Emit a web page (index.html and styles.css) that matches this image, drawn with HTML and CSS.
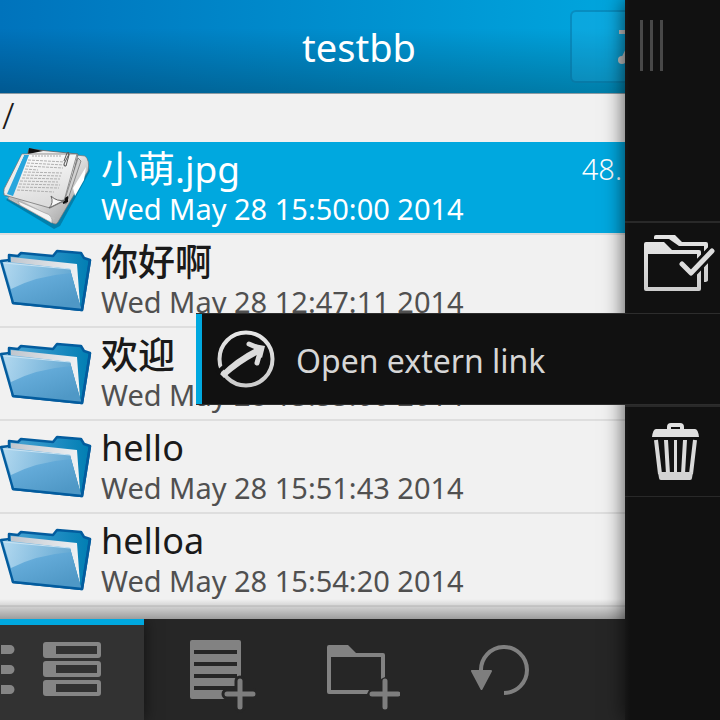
FILE: index.html
```html
<!DOCTYPE html>
<html lang="en">
<head>
<meta charset="utf-8">
<meta name="viewport" content="width=device-width, initial-scale=1">
<title>testbb</title>
<link rel="stylesheet" href="styles.css">
</head>
<body>
<svg class="defs" aria-hidden="true">
  <defs>
    <linearGradient id="back" x1="0" y1="0" x2="1" y2="0"><stop offset="0" stop-color="#4ba5d3"/><stop offset=".6" stop-color="#1e8cc2"/><stop offset="1" stop-color="#007eb2"/></linearGradient>
    <linearGradient id="front" x1="0" y1="0" x2=".6" y2="1"><stop offset="0" stop-color="#8cc4e6"/><stop offset=".5" stop-color="#63aad8"/><stop offset="1" stop-color="#4f98c6"/></linearGradient>
    <linearGradient id="shine" x1="0" y1="0" x2="1" y2="0"><stop offset="0" stop-color="#c0e0f3"/><stop offset="1" stop-color="#69abd3"/></linearGradient>
    <linearGradient id="paper" x1="0" y1="0" x2="1" y2="0"><stop offset="0" stop-color="#bfc6ce"/><stop offset="1" stop-color="#f0f2f4"/></linearGradient>
    <linearGradient id="sheet" x1="0" y1="0" x2=".3" y2="1"><stop offset="0" stop-color="#ffffff"/><stop offset="1" stop-color="#dcdcdc"/></linearGradient>
    <linearGradient id="binder" x1="0" y1="0" x2="1" y2="1"><stop offset="0" stop-color="#888"/><stop offset=".5" stop-color="#e4e4e4"/><stop offset="1" stop-color="#8d8d8d"/></linearGradient>
    <linearGradient id="light" x1="0" y1="0" x2="0" y2="1"><stop offset="0" stop-color="#e6e6e6"/><stop offset="1" stop-color="#cccccc"/></linearGradient>
  </defs>
  <symbol id="folder" viewBox="0 0 92 92">
    <path d="M9 24V20L18 21L21 18L53 21L57 16L81 18L84 23L90 25L82 75L13 68Z" fill="url(#back)" stroke="#035c9e" stroke-width="2.5" stroke-linejoin="round"/>
    <path d="M11 22L77 29L80 70L70 34L11 28Z" fill="url(#paper)"/>
    <path d="M1 26L70 34L80 70L82 75L13 68Z" fill="url(#front)"/>
    <path d="M3 27L69 34L71 38Q36 41 11 54Z" fill="url(#shine)" opacity=".75"/>
    <path d="M4 28L70 34" fill="none" stroke="#c9e3f3" stroke-width="1"/>
    <path d="M10 25L1 26L13 68L82 75L90 25" fill="none" stroke="#035c9e" stroke-width="2.5" stroke-linejoin="round"/>
  </symbol>
</svg>

<div class="app">
  <header class="title-bar">
    <h1>testbb</h1>
    <button class="header-button" aria-label="Edit">
      <svg width="24" height="36" viewBox="0 0 24 36" aria-hidden="true"><path d="M1 3H18L4 32" fill="none" stroke="#c2c2c2" stroke-width="4"/><circle cx="4" cy="31" r="4" fill="#c2c2c2"/></svg>
    </button>
  </header>

  <main class="content">
    <p class="path">/</p>
    <ul class="files">
      <li class="file selected">
        <svg class="thumb" viewBox="0 0 92 92" aria-hidden="true">
          <path d="M6 58L54 87L60 84L90 29L87 20L78 14L40 30Z" fill="#034e6d" opacity=".45"/>
          <path d="M30 7L76 13L85 14Q90 18 88 29L58 80Q56 84 51 80L8 57Z" fill="url(#binder)" stroke="#777" stroke-width=".7"/>
          <path d="M29 7L78 12L66 62L20 40Z" fill="#eee" stroke="#555" stroke-width=".7"/>
          <path d="M29 6L43 9L28 12Z" fill="#111"/>
          <path d="M73 46L86 25L84 38L75 54Z" fill="#fff"/>
          <path d="M5 55L20 58L55 76L52 81L10 57Z" fill="#bdbdbd"/>
          <path d="M18 59L45 71Q53 73 52 81L20 63Z" fill="#f4f4f4" stroke="#999" stroke-width=".6"/>
          <path d="M78 16L81 19L68 57L64 60Z" fill="#d0d0d0" stroke="#555" stroke-width=".6"/>
          <path d="M63 57L68 54V60L63 62Z" fill="#111"/>
          <path d="M22 12L77 12L64 59L50 66L4 53V47Z" fill="url(#sheet)" stroke="#777" stroke-width=".8"/>
          <path d="M24 13L29 13L13 54L7 52Z" fill="#27a6dd"/>
          <path d="M23 13L5 51" stroke="#ececec" stroke-width="2"/>
          <path d="M32 14H62" stroke="#aaa" stroke-width="1" stroke-dasharray="2 1"/>
          <path d="M28 18L65 20M27 21L64 23M26 24L63 26M25 27L38 28M24 30L62 31M23 33L61 34M22 36L60 37M20 39L58 40M19 42L60 43M18 45L59 46M17 48L54 50" stroke="#b0b0b0" stroke-width="1" stroke-dasharray="3 1"/>
          <path d="M65 58Q57 60 51 54Q54 61 49 66Z" fill="#f8f8f8" stroke="#666" stroke-width="1"/>
          <path d="M69 12L64 22Q64 25 66 24L69 13Q69 9 67 11L64 19" fill="none" stroke="#555" stroke-width="1"/>
        </svg>
        <div class="info"><span class="name" lang="zh">小萌.jpg</span><time class="date">Wed May 28 15:50:00 2014</time></div>
        <span class="size">48.</span>
      </li>
      <li class="file">
        <svg class="thumb" aria-hidden="true"><use href="#folder"/></svg>
        <div class="info"><span class="name" lang="zh">你好啊</span><time class="date">Wed May 28 12:47:11 2014</time></div>
      </li>
      <li class="file">
        <svg class="thumb" aria-hidden="true"><use href="#folder"/></svg>
        <div class="info"><span class="name" lang="zh">欢迎</span><time class="date">Wed May 28 13:53:00 2014</time></div>
      </li>
      <li class="file">
        <svg class="thumb" aria-hidden="true"><use href="#folder"/></svg>
        <div class="info"><span class="name">hello</span><time class="date">Wed May 28 15:51:43 2014</time></div>
      </li>
      <li class="file">
        <svg class="thumb" aria-hidden="true"><use href="#folder"/></svg>
        <div class="info"><span class="name">helloa</span><time class="date">Wed May 28 15:54:20 2014</time></div>
      </li>
    </ul>
  </main>

  <nav class="action-bar" aria-label="Actions">
    <button class="action current" aria-label="Files">
      <svg class="edge" width="16" height="80" viewBox="0 0 16 80" aria-hidden="true"><path d="M1 11H10a4.500 4.500 0 0 1 0 9H1ZM1 31H10a4.500 4.500 0 0 1 0 9H1ZM1 51H10a4.500 4.500 0 0 1 0 9H1Z" fill="#858585"/></svg>
      <svg width="80" height="80" viewBox="0 0 80 80" aria-hidden="true"><path fill="#858585" fill-rule="evenodd" d="M14 8H66a3 3 0 0 1 3 3V21a3 3 0 0 1-3 3H14a3 3 0 0 1-3-3V11a3 3 0 0 1 3-3ZM24 12V20H65V12ZM14 27H66a3 3 0 0 1 3 3V40a3 3 0 0 1-3 3H14a3 3 0 0 1-3-3V30a3 3 0 0 1 3-3ZM24 31V39H65V31ZM14 46H66a3 3 0 0 1 3 3V59a3 3 0 0 1-3 3H14a3 3 0 0 1-3-3V49a3 3 0 0 1 3-3ZM24 50V58H65V50Z"/></svg>
    </button>
    <button class="action" aria-label="New file">
      <svg width="80" height="80" viewBox="0 0 80 80" aria-hidden="true"><path fill="#828282" fill-rule="evenodd" d="M16 6H63a2 2 0 0 1 2 2V65H16a2 2 0 0 1-2-2V8a2 2 0 0 1 2-2ZM18 16V20H61V16ZM18 28V32H61V28ZM18 40V44H61V40ZM18 52V56H61V52Z"/><path d="M64 47V73M51 60H77" stroke="#262626" stroke-width="11" stroke-linecap="round"/><path d="M64 47V73M51 60H77" stroke="#7e7e7e" stroke-width="5" stroke-linecap="round"/></svg>
    </button>
    <button class="action" aria-label="New folder">
      <svg width="80" height="80" viewBox="0 0 80 80" aria-hidden="true"><path fill="#828282" fill-rule="evenodd" d="M9 11H28L36 19H63a2 2 0 0 1 2 2V43L61 45V23H11V56H49L47 60H9a2 2 0 0 1-2-2V13a2 2 0 0 1 2-2Z"/><path d="M65 47V73M52 60H78" stroke="#7e7e7e" stroke-width="5" stroke-linecap="round"/></svg>
    </button>
    <button class="action" aria-label="Refresh">
      <svg width="80" height="80" viewBox="0 0 80 80" aria-hidden="true"><path d="M17 37A23 23 0 1 1 40 59" fill="none" stroke="#808080" stroke-width="4"/><path d="M8 37H27L17.500 55Z" fill="#7e7e7e" stroke="#7e7e7e" stroke-width="2" stroke-linejoin="round"/></svg>
    </button>
  </nav>

  <aside class="drawer" aria-label="Context menu">
    <span class="grip"></span>
    <button class="tool" aria-label="Select more">
      <svg viewBox="0 0 95 90" aria-hidden="true">
        <path d="M29 16V14Q29 12 31 12H50L57 19H81Q83 19 83 21V57Q83 59 79 59V23H54L44 16Z" fill="url(#light)"/>
        <path fill="url(#light)" fill-rule="evenodd" d="M21 19H39L47 27H74Q76 27 76 29V66Q76 68 74 68H21Q19 68 19 66V21Q19 19 21 19ZM23 31V64H72V31Z"/>
        <path d="M57 41L66 50L88 27" fill="none" stroke="#111" stroke-width="11"/>
        <path d="M57 41L66 50L87 28" fill="none" stroke="#dddddd" stroke-width="5" stroke-linecap="round" stroke-linejoin="round"/>
      </svg>
    </button>
    <div class="tool">
      <button class="menu-item">
        <svg width="64" height="64" viewBox="0 0 64 64" aria-hidden="true">
          <circle cx="32" cy="32" r="26.500" fill="none" stroke="url(#light)" stroke-width="4"/>
          <path d="M3 46L12 38" fill="none" stroke="#111" stroke-width="4"/>
          <path d="M6 47Q22 31 42 21L47 26Q28 35 10 51Z" fill="#dcdcdc"/>
          <path d="M35 17L47 22L43 36" fill="none" stroke="#dcdcdc" stroke-width="5" stroke-linecap="round"/>
          <path d="M40 17L51 19L48 31L40 25Z" fill="#dcdcdc"/>
        </svg>
        <span class="menu-label">Open extern link</span>
      </button>
    </div>
    <button class="tool last" aria-label="Delete">
      <svg viewBox="0 0 95 90" aria-hidden="true">
        <path d="M44 23V20Q44 18 46 18H55Q57 18 57 20V23" fill="none" stroke="#e2e2e2" stroke-width="4"/>
        <path d="M31 22H70Q73 22 74 30H27Q28 22 31 22Z" fill="#dfdfdf"/>
        <path d="M31 33L35 67M41 33L43 67M60 33L58 67M70 33L66 67" stroke="#dadada" stroke-width="4" fill="none"/>
        <path d="M49 33h3V67h-3z" fill="#dadada"/>
        <path d="M33 65H68L67 71Q67 73 65 73H36Q34 73 34 71Z" fill="#d3d3d3"/>
      </svg>
    </button>
  </aside>
</div>
</body>
</html>
```
FILE: styles.css
```css
* { box-sizing: border-box; }

body {
  margin: 0;
  font-family: "Noto Sans", "Noto Sans CJK SC", sans-serif;
  color: #1a1a1a;
  background: #f1f1f1;
}

button {
  padding: 0;
  border: 0;
  background: none;
  font: inherit;
  color: inherit;
}

svg { display: block; }

.defs {
  position: absolute;
  width: 0;
  height: 0;
}

.app {
  position: relative;
  display: flex;
  flex-direction: column;
  min-height: 100vh;
  overflow: hidden;
}

.title-bar {
  display: grid;
  grid-template-columns: 142px 1fr 144px;
  align-items: center;
  height: 94px;
  border-bottom: 1px solid #8c9ba3;
  background:
    linear-gradient(to bottom, rgba(0, 0, 0, 0) 30%, rgba(0, 0, 0, 0.23) 100%),
    linear-gradient(to right, #0073bc, #00a8df 90%);
}

.title-bar h1 {
  grid-column: 2;
  margin: 0;
  font-size: 38px;
  line-height: 48px;
  font-weight: 400;
  text-align: center;
  color: #fff;
}

.header-button {
  justify-self: start;
  width: 136px;
  height: 73px;
  margin-left: -6px;
  padding-left: 46px;
  border: 2px solid rgba(0, 80, 120, 0.3);
  border-radius: 6px;
  background: rgba(70, 190, 240, 0.16);
}

.content {
  position: relative;
  flex: 1;
}

.content::after {
  content: "";
  position: absolute;
  inset: auto 0 0;
  height: 20px;
  background: linear-gradient(to bottom, rgba(0, 0, 0, 0), rgba(0, 0, 0, 0.35));
}

.path {
  height: 48px;
  margin: 0;
  padding-left: 2px;
  font-size: 36px;
  line-height: 44px;
  font-weight: 300;
}

.files {
  margin: 0;
  padding: 0;
  list-style: none;
}

.file {
  display: flex;
  height: 93px;
  border-bottom: 2px solid #dedede;
}

.thumb {
  width: 92px;
  height: 92px;
  margin-right: 9px;
}

.info {
  display: flex;
  flex: 1;
  flex-direction: column;
  padding-top: 7px;
}

.name {
  font-size: 36px;
  line-height: 40px;
}

.name:lang(zh) {
  font-size: 37px;
  font-weight: 500;
}

.date {
  font-size: 29px;
  line-height: 40px;
  color: #505050;
}

.size {
  padding: 7px 98px 0 0;
  font-size: 29px;
  line-height: 40px;
  font-weight: 300;
}

.selected {
  background: #00a8df;
  background-clip: padding-box;
}

.selected, .selected .date { color: #fff; }

.selected .name { font-weight: 400; }

.action-bar {
  display: grid;
  grid-template-columns: repeat(5, 1fr);
  height: 101px;
  overflow: hidden;
  background: #262626;
}

.action {
  position: relative;
  display: flex;
  justify-content: center;
  padding-top: 15px;
}

.current {
  padding-top: 9px;
  border-top: 6px solid #00a8df;
  background: #323232;
  box-shadow: 1px 0 14px rgba(0, 0, 0, 0.5);
}

.edge {
  position: absolute;
  left: 0;
}

.drawer {
  position: absolute;
  inset: 0 0 0 auto;
  display: flex;
  flex-direction: column;
  justify-content: center;
  width: 95px;
  padding-bottom: 2px;
  background: linear-gradient(to right, #171717, #111 5px);
  box-shadow: 0 0 20px rgba(0, 0, 0, 0.7);
}

.grip {
  position: absolute;
  top: 20px;
  left: 15px;
  width: 23px;
  height: 51px;
  background: repeating-linear-gradient(to right, #484848 0 3px, transparent 3px 10px);
}

.tool {
  position: relative;
  height: 92px;
  border-top: 2px solid #292929;
}

.last {
  border-bottom: 1px solid #292929;
}

.menu-item {
  position: absolute;
  top: -2px;
  right: 0;
  display: flex;
  align-items: center;
  gap: 18px;
  width: 524px;
  height: 92px;
  padding-left: 18px;
  border: solid #2d2d2d;
  border-width: 1px 0;
  background: #111;
  box-shadow: inset 6px 0 #00a8df;
  font-size: 32px;
  line-height: 40px;
  color: #d6d6d6;
}

.menu-label { padding-top: 4px; }
```
